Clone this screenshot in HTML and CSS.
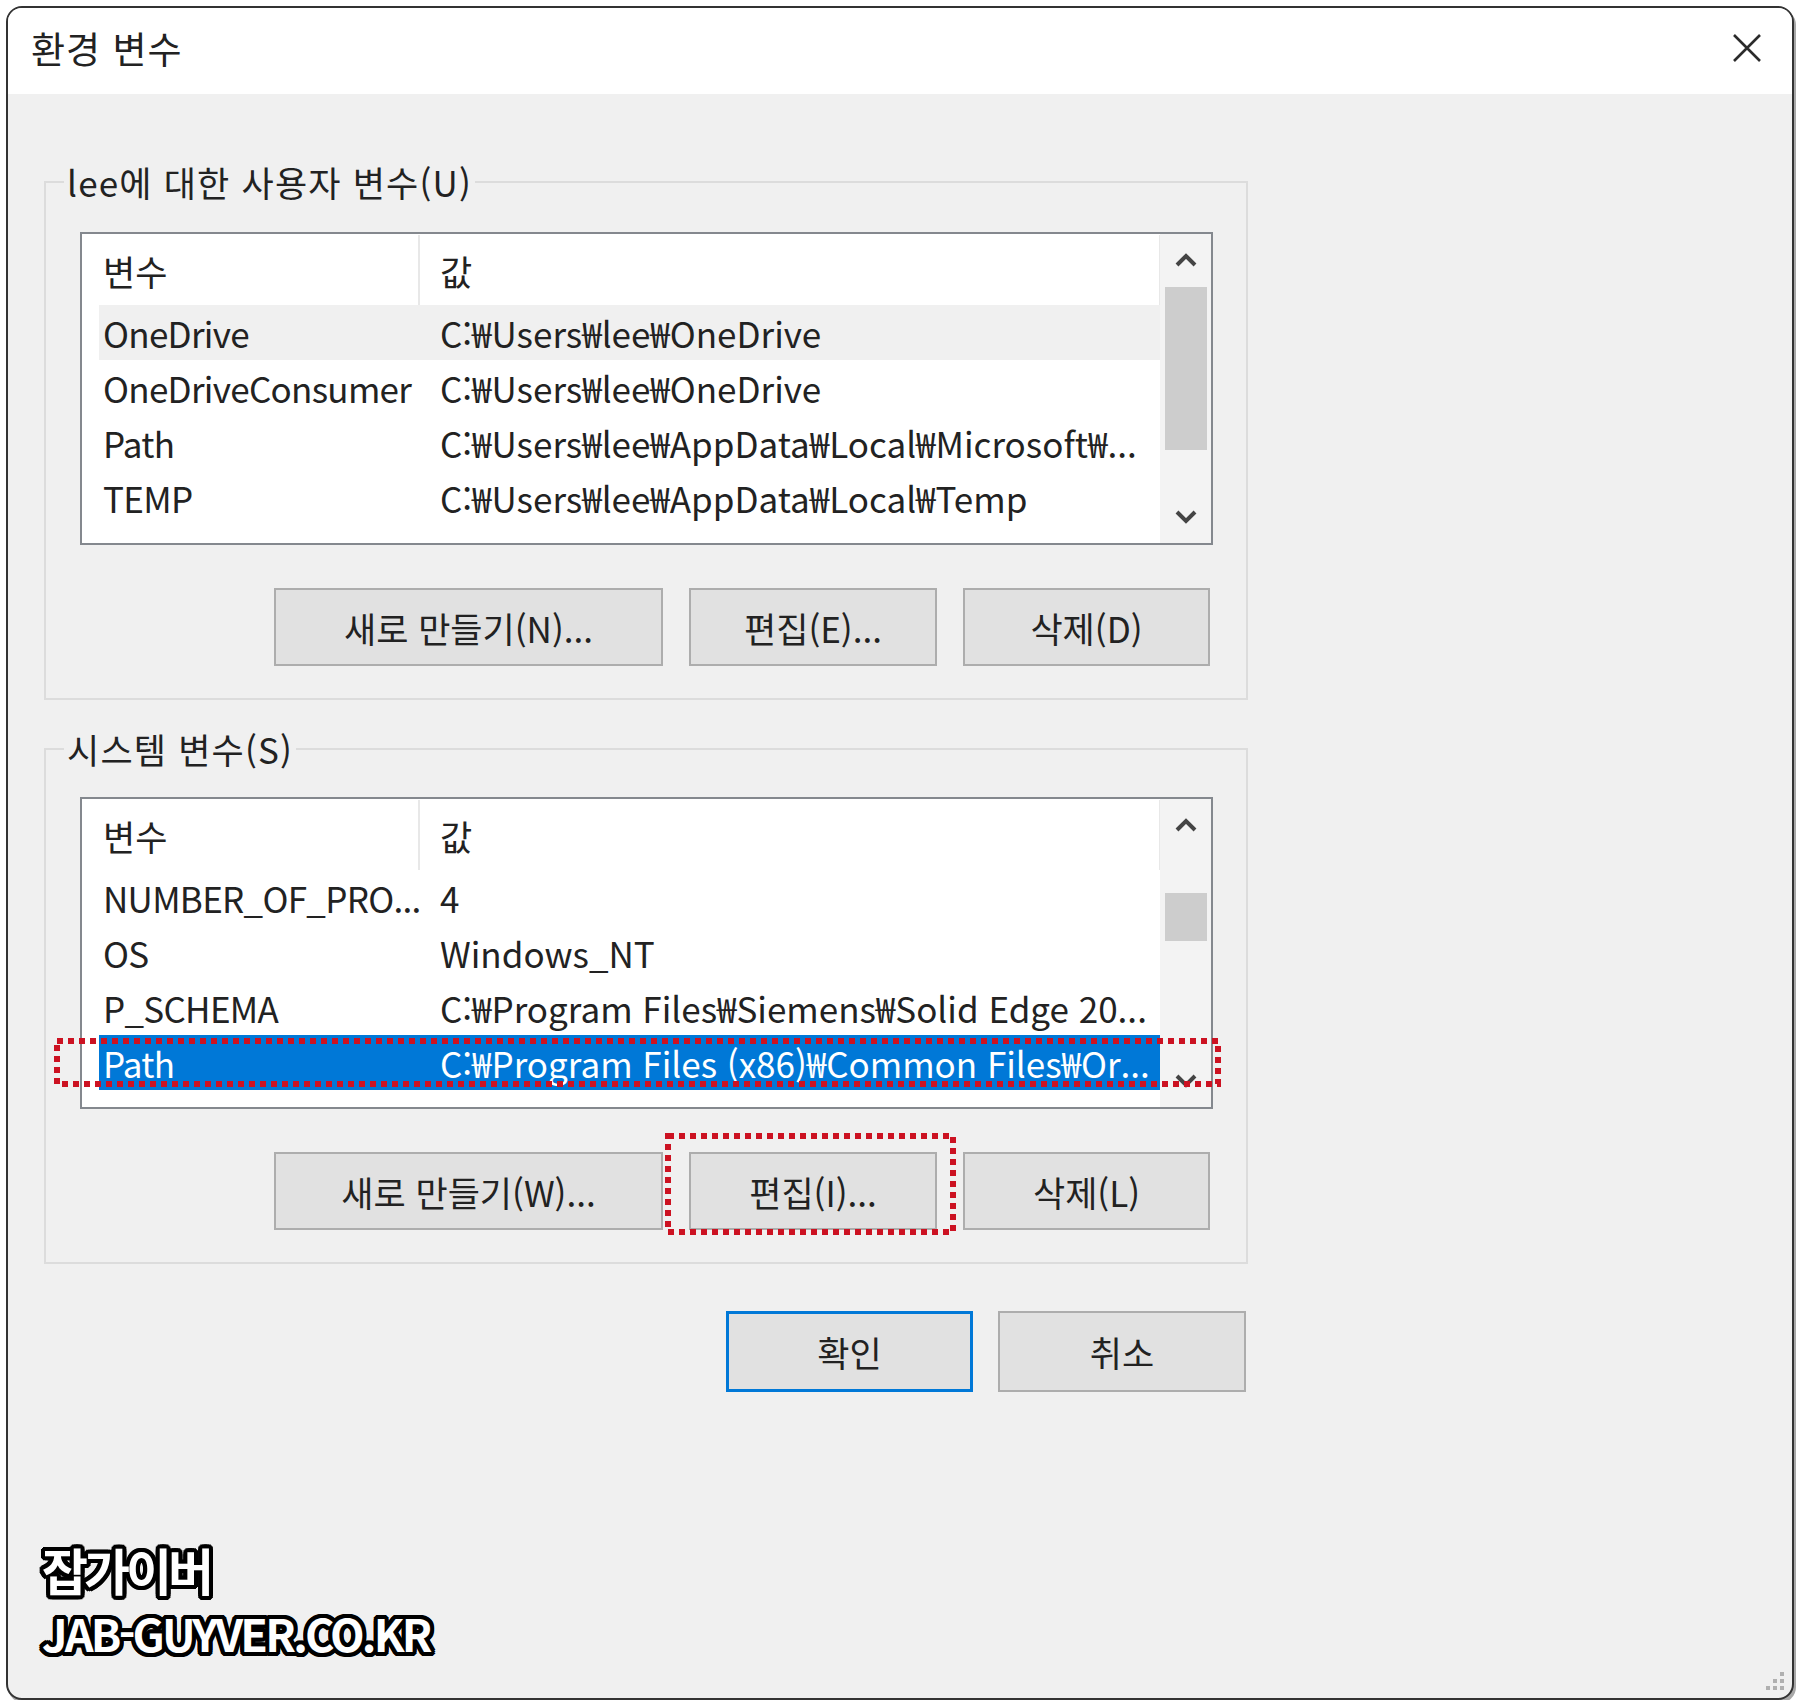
FILE: index.html
```html
<!DOCTYPE html>
<html lang="ko">
<head>
<meta charset="utf-8">
<title>환경 변수</title>
<link rel="stylesheet" href="styles.css">
</head>
<body>
<div class="window">
  <div class="titlebar">
    <span class="title">환경 변수</span>
    <svg class="close" width="32" height="32" viewBox="0 0 32 32"><path d="M3 3 L29 29 M29 3 L3 29" stroke="#2b2b2b" stroke-width="2.6" fill="none"/></svg>
  </div>
  <div class="content">
    <fieldset class="group group-user">
      <legend>lee에 대한 사용자 변수(U)</legend>
      <div class="group-inner">
        <div class="list list-user">
          <div class="table">
            <div class="thead"><div class="col-name">변수</div><div class="col-val">값</div></div>
            <div class="row hover"><div class="col-name">OneDrive</div><div class="col-val">C:₩Users₩lee₩OneDrive</div></div>
            <div class="row"><div class="col-name">OneDriveConsumer</div><div class="col-val">C:₩Users₩lee₩OneDrive</div></div>
            <div class="row"><div class="col-name">Path</div><div class="col-val">C:₩Users₩lee₩AppData₩Local₩Microsoft₩...</div></div>
            <div class="row"><div class="col-name">TEMP</div><div class="col-val">C:₩Users₩lee₩AppData₩Local₩Temp</div></div>
          </div>
          <div class="scrollbar">
            <div class="sb-btn"><svg width="24" height="16" viewBox="0 0 24 16"><polyline points="3,13 12,4 21,13" fill="none" stroke="#444" stroke-width="4"/></svg></div>
            <div class="sb-track"><div class="thumb thumb-user"></div></div>
            <div class="sb-btn"><svg width="24" height="16" viewBox="0 0 24 16"><polyline points="3,3 12,12 21,3" fill="none" stroke="#444" stroke-width="4"/></svg></div>
          </div>
        </div>
        <div class="btnrow">
          <button class="btn btn-new">새로 만들기(N)...</button>
          <button class="btn btn-edit">편집(E)...</button>
          <button class="btn btn-del">삭제(D)</button>
        </div>
      </div>
    </fieldset>

    <fieldset class="group group-sys">
      <legend>시스템 변수(S)</legend>
      <div class="group-inner">
        <div class="list list-sys">
          <div class="table">
            <div class="thead"><div class="col-name">변수</div><div class="col-val">값</div></div>
            <div class="row"><div class="col-name">NUMBER_OF_PRO...</div><div class="col-val">4</div></div>
            <div class="row"><div class="col-name">OS</div><div class="col-val">Windows_NT</div></div>
            <div class="row"><div class="col-name">P_SCHEMA</div><div class="col-val">C:₩Program Files₩Siemens₩Solid Edge 20...</div></div>
            <div class="row selected"><div class="col-name">Path</div><div class="col-val">C:₩Program Files (x86)₩Common Files₩Or...</div></div>
          </div>
          <div class="scrollbar">
            <div class="sb-btn"><svg width="24" height="16" viewBox="0 0 24 16"><polyline points="3,13 12,4 21,13" fill="none" stroke="#444" stroke-width="4"/></svg></div>
            <div class="sb-track"><div class="thumb thumb-sys"></div></div>
            <div class="sb-btn"><svg width="24" height="16" viewBox="0 0 24 16"><polyline points="3,3 12,12 21,3" fill="none" stroke="#444" stroke-width="4"/></svg></div>
          </div>
        </div>
        <div class="btnrow">
          <button class="btn btn-new">새로 만들기(W)...</button>
          <button class="btn btn-edit">편집(I)...</button>
          <button class="btn btn-del">삭제(L)</button>
        </div>
      </div>
    </fieldset>

    <div class="dialog-btns">
      <button class="btn btn-ok">확인</button>
      <button class="btn btn-cancel">취소</button>
    </div>
  </div>

  <svg class="mark mark-row" width="1167" height="49" viewBox="0 0 1167 49"><rect x="3" y="3" width="1161" height="43" fill="none" stroke="#cc1222" stroke-width="6" stroke-dasharray="6 5"/></svg>
  <svg class="mark mark-btn" width="291" height="102" viewBox="0 0 291 102"><rect x="3" y="3" width="285" height="96" fill="none" stroke="#cc1222" stroke-width="6" stroke-dasharray="6 5"/></svg>

  <div class="watermark">
    <div class="wm-ko">잡가이버</div>
    <div class="wm-en">JAB-GUYVER.CO.KR</div>
  </div>

  <svg class="grip" width="22" height="22" viewBox="0 0 22 22">
    <rect x="16" y="2" width="4" height="4" fill="#b0b0b0"/>
    <rect x="9" y="9" width="4" height="4" fill="#b0b0b0"/>
    <rect x="16" y="9" width="4" height="4" fill="#b0b0b0"/>
    <rect x="2" y="16" width="4" height="4" fill="#b0b0b0"/>
    <rect x="9" y="16" width="4" height="4" fill="#b0b0b0"/>
    <rect x="16" y="16" width="4" height="4" fill="#b0b0b0"/>
  </svg>
</div>
</body>
</html>
```

FILE: styles.css
```css
* { box-sizing: border-box; }

html, body {
  margin: 0;
  padding: 0;
  background: #ffffff;
}

body {
  font-family: "Noto Sans CJK KR", "Noto Sans", sans-serif;
  color: #222;
}

.window {
  position: relative;
  margin: 6px 0 0 6px;
  width: 1788px;
  height: 1694px;
  border: 2px solid #333;
  border-radius: 16px;
  overflow: hidden;
  background: #f0f0f0;
  box-shadow: 2px 3px 0 #a8a8a8;
}

.titlebar {
  height: 86px;
  background: #fff;
  display: flex;
  align-items: center;
  justify-content: space-between;
  padding: 0 29px 6px 23px;
}

.title {
  font-size: 37px;
  line-height: 44px;
  letter-spacing: 1px;
  color: #222;
}

.close {
  display: block;
}

.content {
  padding-left: 36px;
}

.group {
  width: 1204px;
  margin: 0;
  padding: 0;
  border: 2px solid #dcdcdc;
  min-width: 0;
}

.group legend {
  font-size: 35px;
  line-height: 44px;
  padding: 0 3px;
  margin-left: 18px;
  letter-spacing: 1.2px;
  color: #222;
}

.group-user { margin-top: 66px; }
.group-sys { margin-top: 27px; }

.group-inner {
  padding: 26px 33px 32px 34px;
}

.group-user .group-inner { padding-top: 28px; }

.list {
  display: flex;
  background: #fff;
  border: 2px solid #84888e;
  overflow: hidden;
}

.list-user { height: 313px; }
.list-sys { height: 312px; }

.table {
  flex: 1;
  padding-left: 17px;
  font-size: 35px;
  overflow: hidden;
}

.thead {
  display: flex;
  height: 70px;
  margin-top: 1px;
  align-items: center;
}

.thead .col-name {
  height: 100%;
  display: flex;
  align-items: center;
  border-right: 2px solid #e8e8e8;
}

.thead .col-val {
  height: 100%;
  display: flex;
  align-items: center;
  border-right: 1px solid #e8e8e8;
}

.col-name {
  width: 321px;
  flex: none;
  padding-left: 4px;
  white-space: nowrap;
  overflow: hidden;
}

.row .col-name {
  letter-spacing: -0.7px;
}

.col-val {
  flex: 1;
  padding-left: 20px;
  white-space: nowrap;
  overflow: hidden;
}

.row {
  display: flex;
  height: 55px;
  line-height: 55px;
}

.row.hover { background: #f0f0f0; }

.row.selected {
  background: #0078d7;
  color: #fff;
}

.scrollbar {
  width: 51px;
  flex: none;
  background: #f3f3f3;
  display: flex;
  flex-direction: column;
}

.sb-btn {
  height: 52px;
  display: flex;
  align-items: center;
  justify-content: center;
  flex: none;
}

.sb-track {
  flex: 1;
  display: flex;
  flex-direction: column;
  align-items: center;
}

.thumb {
  width: 42px;
  background: #cdcdcd;
}

.thumb-user { margin-top: 1px; height: 163px; }
.thumb-sys { margin-top: 42px; height: 48px; }

.btnrow {
  display: flex;
  justify-content: flex-end;
  gap: 26px;
  margin-top: 43px;
  padding-right: 3px;
}

.btn {
  height: 78px;
  border: 2px solid #adadad;
  background: #e1e1e1;
  font-family: "Noto Sans CJK KR", "Noto Sans", sans-serif;
  font-size: 35px;
  color: #222;
  padding: 0;
  border-radius: 0;
}

.btn-new { width: 389px; }
.btn-edit { width: 248px; }
.btn-del { width: 247px; }

.dialog-btns {
  width: 1204px;
  display: flex;
  justify-content: flex-end;
  gap: 25px;
  margin-top: 47px;
  padding-right: 2px;
}

.dialog-btns .btn {
  height: 81px;
}

.btn-ok {
  width: 247px;
  border: 3px solid #0078d7;
}

.btn-cancel { width: 248px; }

.mark {
  position: absolute;
  display: block;
}

.mark-row { left: 46px; top: 1030px; }
.mark-btn { left: 657px; top: 1125px; }

.watermark {
  position: absolute;
  left: 34px;
  top: 1529px;
  color: #fff;
  font-weight: 700;
  text-shadow:
    4px 0 0 #000, -4px 0 0 #000, 0 4px 0 #000, 0 -4px 0 #000,
    3px 3px 0 #000, -3px 3px 0 #000, 3px -3px 0 #000, -3px -3px 0 #000,
    2px 4px 0 #000, -2px 4px 0 #000, 2px -4px 0 #000, -2px -4px 0 #000,
    4px 2px 0 #000, -4px 2px 0 #000, 4px -2px 0 #000, -4px -2px 0 #000;
}

.wm-ko {
  font-size: 50px;
  line-height: 64px;
  letter-spacing: -4px;
}

.wm-en {
  margin-top: 4px;
  font-size: 45px;
  line-height: 56px;
  letter-spacing: -2.8px;
}

.grip {
  position: absolute;
  right: 6px;
  bottom: 6px;
}
```
